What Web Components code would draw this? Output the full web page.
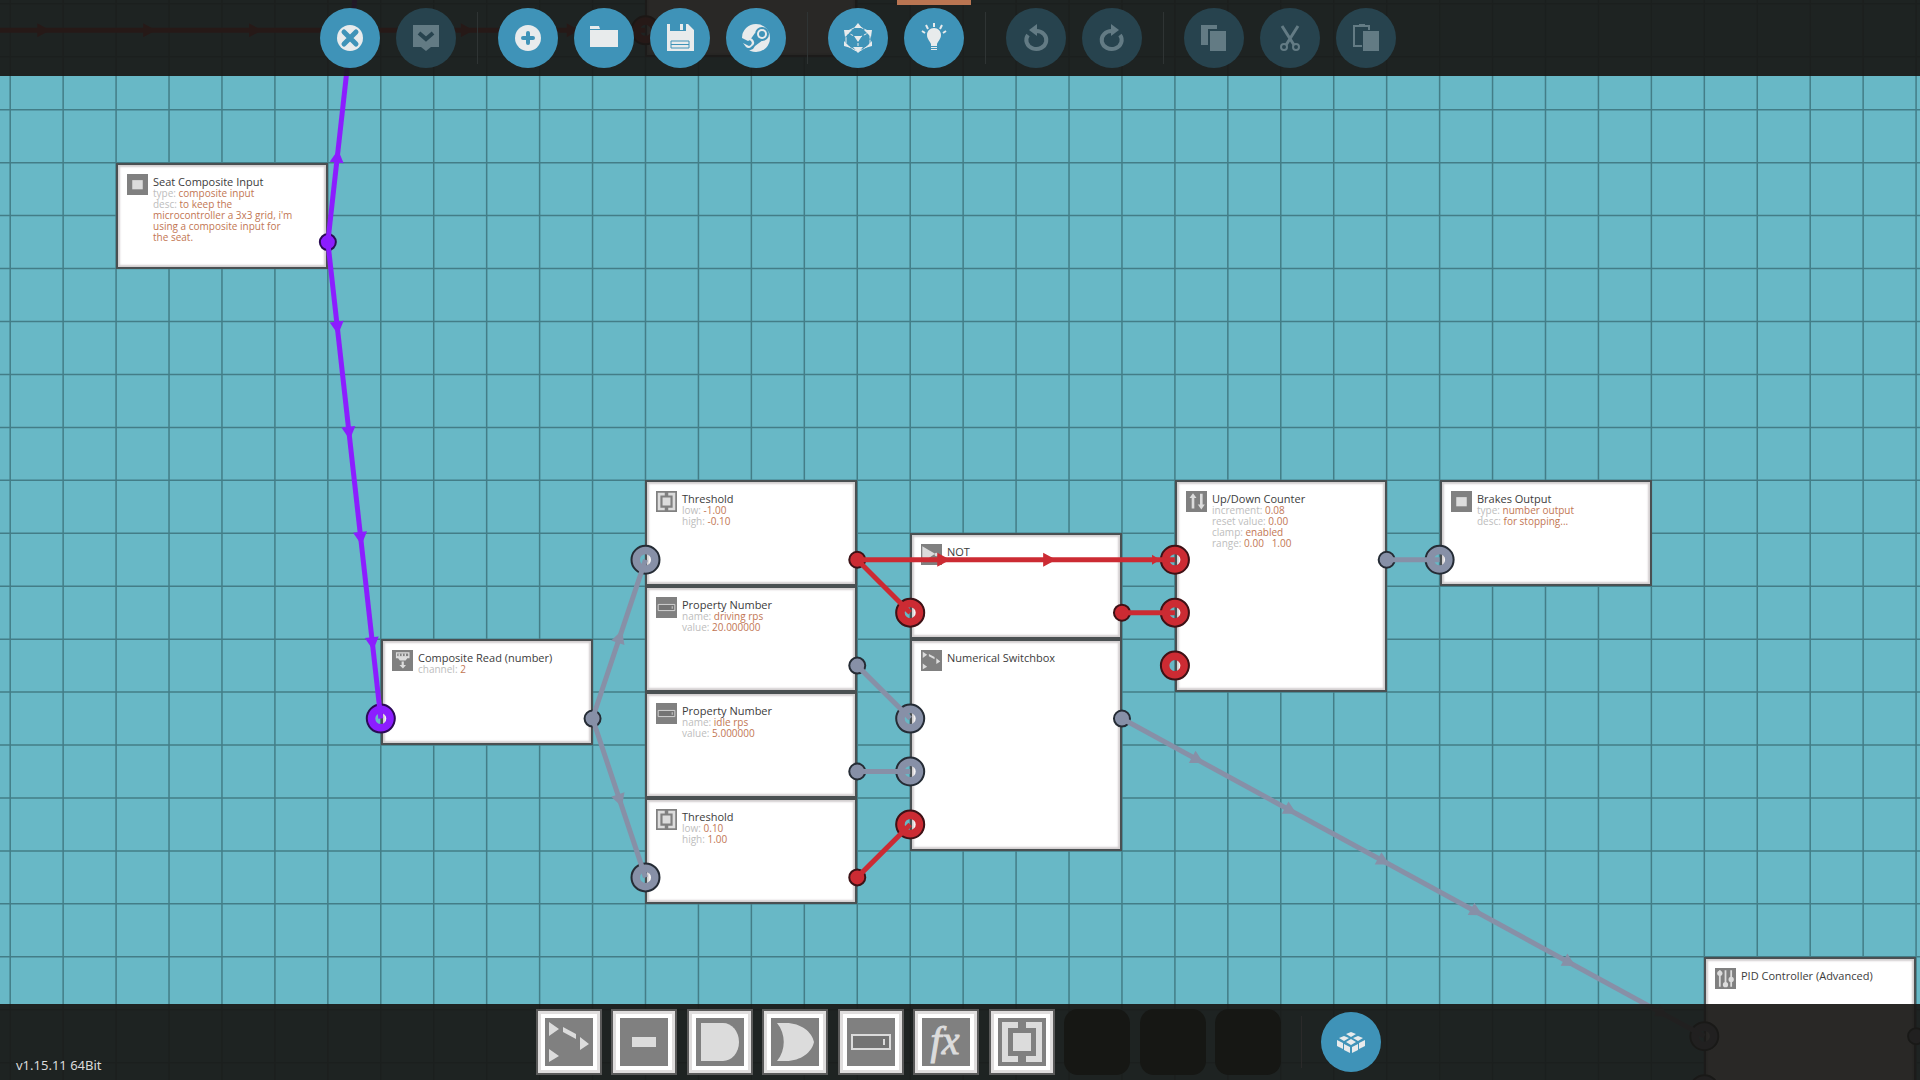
<!DOCTYPE html>
<html lang="en">
<head>
<meta charset="utf-8">
<title>Microcontroller Editor</title>
<style>
  html, body { margin: 0; height: 100%; background: #68b8c6; }
  body { font-family: "Noto Sans", "Open Sans", sans-serif; overflow: hidden; }
</style>
</head>
<body>
<editor-shell>
  <logic-board slot="board">
    <logic-node col="12" row="-2" rows="2"></logic-node>
    <logic-node col="2" row="2" rows="2" icon="pin" heading="Seat Composite Input">
      <node-field label="type:">composite input</node-field>
      <node-field label="desc:">to keep the <span>microcontroller a 3x3 grid, i'm using a composite input for the seat.</span></node-field>
    </logic-node>
    <logic-node col="7" row="11" rows="2" icon="read" heading="Composite Read (number)">
      <node-field label="channel:">2</node-field>
    </logic-node>
    <logic-node col="12" row="8" rows="2" icon="threshold" heading="Threshold">
      <node-field label="low:">-1.00</node-field>
      <node-field label="high:">-0.10</node-field>
    </logic-node>
    <logic-node col="12" row="10" rows="2" icon="property" heading="Property Number">
      <node-field label="name:">driving rps</node-field>
      <node-field label="value:">20.000000</node-field>
    </logic-node>
    <logic-node col="12" row="12" rows="2" icon="property" heading="Property Number">
      <node-field label="name:">idle rps</node-field>
      <node-field label="value:">5.000000</node-field>
    </logic-node>
    <logic-node col="12" row="14" rows="2" icon="threshold" heading="Threshold">
      <node-field label="low:">0.10</node-field>
      <node-field label="high:">1.00</node-field>
    </logic-node>
    <logic-node col="17" row="9" rows="2" icon="not" heading="NOT"></logic-node>
    <logic-node col="17" row="11" rows="4" icon="switch" heading="Numerical Switchbox"></logic-node>
    <logic-node col="22" row="8" rows="4" icon="counter" heading="Up/Down Counter">
      <node-field label="increment:">0.08</node-field>
      <node-field label="reset value:">0.00</node-field>
      <node-field label="clamp:">enabled</node-field>
      <node-field label="range:">0.00 &nbsp; 1.00</node-field>
    </logic-node>
    <logic-node col="27" row="8" rows="2" icon="pin" heading="Brakes Output">
      <node-field label="type:">number output</node-field>
      <node-field label="desc:">for stopping...</node-field>
    </logic-node>
    <logic-node col="32" row="17" rows="5" icon="pid" heading="PID Controller (Advanced)"></logic-node>
  </logic-board>

  <tool-bar slot="top">
    <tool-group>
      <round-button icon="close" label="Close"></round-button>
      <round-button icon="apply" label="Apply" disabled></round-button>
    </tool-group>
    <tool-group>
      <round-button icon="new" label="New"></round-button>
      <round-button icon="open" label="Open"></round-button>
      <round-button icon="save" label="Save"></round-button>
      <round-button icon="workshop" label="Workshop"></round-button>
    </tool-group>
    <tool-group>
      <round-button icon="body" label="Body"></round-button>
      <round-button icon="logic" label="Logic" selected></round-button>
    </tool-group>
    <tool-group>
      <round-button icon="undo" label="Undo" disabled></round-button>
      <round-button icon="redo" label="Redo" disabled></round-button>
    </tool-group>
    <tool-group>
      <round-button icon="copy" label="Copy" disabled></round-button>
      <round-button icon="cut" label="Cut" disabled></round-button>
      <round-button icon="paste" label="Paste" disabled></round-button>
    </tool-group>
  </tool-bar>

  <hot-bar slot="bottom">
    <hot-slot icon="switch" label="Numerical Switchbox"></hot-slot>
    <hot-slot icon="constant" label="Constant"></hot-slot>
    <hot-slot icon="and" label="AND"></hot-slot>
    <hot-slot icon="or" label="OR"></hot-slot>
    <hot-slot icon="property" label="Property Number"></hot-slot>
    <hot-slot icon="function" label="Function"></hot-slot>
    <hot-slot icon="threshold" label="Threshold"></hot-slot>
    <hot-slot></hot-slot>
    <hot-slot></hot-slot>
    <hot-slot></hot-slot>
    <round-button slot="action" icon="blocks" label="Components"></round-button>
    <span slot="version">v1.15.11 64Bit</span>
  </hot-bar>
</editor-shell>

<script>
// Board geometry: 17 cells span 900 pixels.
const CELL = 900 / 17;
const gx = c => 10.2 + c * CELL;
const gy = r => 56.8 + r * CELL;

// Component glyphs, drawn light on a 48 x 48 grey plate.
const NODE_ICONS = {
  pin: '<path d="M12 14h24v21H12z"/>',
  constant: '<path d="M12 19h24v10H12z"/>',
  switch: '<path d="M4 4v14l10-7zM4 31v13l10-6zM35 19v13l9-6zM18 9l13 7v5l-13-7z"/>',
  and: '<path d="M5 5h22a16 19 0 0 1 0 38H5z"/>',
  or: '<path d="M6 5h9c15 0 26 9 28 19-2 10-13 19-28 19H6C15 32 15 16 6 5z"/>',
  property: '<path d="M5 17h38v14H5z" fill="#747474" stroke="#dcdcdc" stroke-width="2"/><path d="M36 21h2v6h-2z"/>',
  threshold: '<path d="M4 4h16v6H10v28h10v6H4zM44 4H28v6h10v28H28v6h16zM15 15h18v18H15z"/>',
  read: '<path d="M9 5h31v14h-5l-4 5H18l-4-5H9z"/><path d="M12 8h25v6H12z" fill="#808080"/><path d="M15 8h3v6h-3zM22 8h3v6h-3zM29 8h3v6h-3zM22 26h5v8h5l-7 8-8-8h5z"/>',
  not: '<path d="M3 5l29 17-29 20z"/><circle cx="35" cy="24" r="4"/>',
  counter: '<path d="M16 5l8 11h-5v24h-6V16H8zM35 42l8-11h-5V6h-6v25h-5z"/>',
  pid: '<path d="M9 5h4v38H9zM22 5h4v38h-4zM35 5h4v38h-4z"/><circle cx="11" cy="12" r="6"/><circle cx="24" cy="38" r="6"/><circle cx="37" cy="26" r="6"/>',
  function: '<text x="23" y="36" text-anchor="middle" font-family="Liberation Serif, serif" font-style="italic" font-size="40" stroke="#dcdcdc" stroke-width="1">fx</text>'
};

// Button glyphs on a 60 x 60 disc. --disc paints the cut-out parts.
const BUTTON_ICONS = {
  close: '<circle cx="30" cy="30" r="13"/><path class="cut" d="M24 24l12 12M36 24L24 36" stroke-width="5" stroke-linecap="round"/>',
  apply: '<path d="M17 17h26v22h-8l-5 4-5-4h-8z"/><path class="cut" d="M23 25l7 6 7-6" stroke-width="4"/>',
  new: '<circle cx="30" cy="30" r="13"/><path class="cut" d="M30 25v10M25 30h10" stroke-width="4" stroke-linecap="round"/>',
  open: '<path d="M16 18h9l1 3H16zM16 22h28v17H16z"/>',
  save: '<path d="M17 16h3v7h16v-7h2l6 6v21H17z"/><path d="M30 16h3v6h-3z"/><path class="cut" d="M21 33h18v7H21zM21 36.500h18" stroke-width="1"/>',
  workshop: '<circle cx="30" cy="30" r="14"/><path class="hole" d="M14 29l8 4 2-1 5-7 8 7-8 6-2 3-5 2-6-5-2-4z"/><circle class="hole" cx="36" cy="26" r="7"/><circle cx="36" cy="26" r="5"/><circle class="hole" cx="36" cy="26" r="3"/><path d="M17 35l6 3a3 3 0 0 0 2-5l-3-2a4 4 0 0 1 4 7 4 4 0 0 1-6 1z"/>',
  body: '<path d="M30 18l12 6v13l-12 7-12-7V24z" fill="none" stroke="currentColor" stroke-width="1" stroke-dasharray="6 1"/><path d="M18 24l12 6 12-6M30 30v14" fill="none" stroke="currentColor" stroke-width="1" stroke-dasharray="3 2"/><path d="M30 15l4 5h-8zM30 45l5-6H25zM16 22h8l-7 7zM44 22h-8l7 7zM16 33l7 7-7-2zM44 33l-7 7 7-2zM30 34l-4-6h8z"/>',
  logic: '<path d="M30 20c4 0 7 3 7 7 0 4-3 6-4 9v2h-6v-2c-1-3-4-5-4-9 0-4 3-7 7-7zM27 39h6v1h-6zM27 41h6v1h-6z"/><path d="M30 15v4M22 17l2 4M38 17l-2 4M18 23l3 2M42 23l-3 2" fill="none" stroke="currentColor" stroke-width="2"/>',
  undo: '<path d="M22 27a10 9 0 1 0 8-4h-2" fill="none" stroke="currentColor" stroke-width="4"/><path d="M31 16v12l-8-6z"/>',
  redo: '<path d="M38 27a10 9 0 1 1-8-4h2" fill="none" stroke="currentColor" stroke-width="4"/><path d="M29 16v12l8-6z"/>',
  copy: '<path d="M17 17h16v4h-9v16h-7zM26 23h16v20H26z"/>',
  cut: '<path d="M22 18l12 19M38 18L26 37" fill="none" stroke="currentColor" stroke-width="3"/><circle cx="24" cy="39" r="3" fill="none" stroke="currentColor" stroke-width="2"/><circle cx="36" cy="39" r="3" fill="none" stroke="currentColor" stroke-width="2"/>',
  paste: '<path d="M26 38h-8V18h15v4" fill="none" stroke="currentColor" stroke-width="2"/><path d="M23 16h6v3h-6zM27 23h16v20H27z"/>',
  blocks: '<path d="M30 20l5 2-5 3-5-3zM23 24l5 2-5 3-5-3zM37 24l5 2-5 3-5-3zM30 27l5 3-5 3-5-3zM16 28l6 3v6l-6-3zM44 28l-6 3v6l6-3zM23 32l6 3v6l-6-3zM37 32l-6 3v6l6-3z"/>'
};

const plate = name =>
  `<svg viewBox="0 0 48 48" aria-hidden="true"><path d="M0 0h48v48H0z" fill="#808080"/><g fill="#dcdcdc">${NODE_ICONS[name]}</g></svg>`;

class BaseElement extends HTMLElement {
  connectedCallback() {
    if (this.shadowRoot) return;
    this.attachShadow({ mode: 'open' }).innerHTML = this.render();
  }
}

customElements.define('editor-shell', class extends BaseElement {
  render() {
    return `<style>
      :host { position: relative; display: flex; flex-direction: column; justify-content: space-between; height: 100vh; overflow: hidden; }
      slot[name="board"]::slotted(*) { position: absolute; inset: 0; }
      ::slotted(:not([slot="board"])) { position: relative; }
    </style><slot name="board"></slot><slot name="top"></slot><slot name="bottom"></slot>`;
  }
});

const WIRE = { purple: '#8c1dff', red: '#cc2b33', grey: '#8790a7' };
const EDGE = { purple: '#2b0b55', red: '#3d1216', grey: '#252c35' };
const WIRES = [
  ['purple', 6, 3.5, 7, -5.5], ['purple', 6, 3.5, 7, 12.5],
  ['grey', 11, 12.5, 12, 9.5], ['grey', 11, 12.5, 12, 15.5],
  ['grey', 16, 11.5, 17, 12.5], ['grey', 16, 13.5, 17, 13.5],
  ['grey', 26, 9.5, 27, 9.5], ['grey', 21, 12.5, 32, 18.5],
  ['red', 16, 9.5, 17, 10.5], ['red', 16, 9.5, 22, 9.5],
  ['red', 21, 10.5, 22, 10.5], ['red', 16, 15.5, 17, 14.5],
  ['red', -5, -0.5, 12, -0.5]
];
const INPUTS = [
  ['purple', 7, 12.5], ['grey', 12, 9.5], ['grey', 12, 15.5],
  ['red', 17, 10.5], ['grey', 17, 12.5], ['grey', 17, 13.5], ['red', 17, 14.5],
  ['red', 22, 9.5], ['red', 22, 10.5], ['red', 22, 11.5],
  ['grey', 27, 9.5], ['grey', 32, 18.5], ['grey', 32, 19.5], ['red', 12, -0.5]
];
const OUTPUTS = [
  ['purple', 6, 3.5], ['grey', 11, 12.5], ['red', 16, 9.5], ['grey', 16, 11.5],
  ['grey', 16, 13.5], ['red', 16, 15.5], ['red', 21, 10.5], ['grey', 21, 12.5],
  ['grey', 26, 9.5], ['grey', 36, 18.5]
];

customElements.define('logic-board', class extends BaseElement {
  grid() {
    let d = '';
    for (let c = 0; c < 80; c++) d += `M${gx(c)} 0V3000`;
    for (let r = -1; r < 55; r++) d += `M0 ${gy(r)}H4200`;
    return `<path d="${d}" fill="none" stroke="#437d87" stroke-width="1.5"/>`;
  }
  wire([tone, c1, r1, c2, r2]) {
    const x1 = gx(c1), y1 = gy(r1), x2 = gx(c2), y2 = gy(r2);
    const len = Math.hypot(x2 - x1, y2 - y1);
    const angle = Math.atan2(y2 - y1, x2 - x1) * 180 / Math.PI;
    let heads = '';
    for (let d = 80; d < len - 20; d += CELL * 2) {
      const small = len - d < 40;
      heads += small ? `M${d + 3} -5l8 5-8 5z` : `M${d} -7l13 7-13 7z`;
    }
    return `<g transform="translate(${x1} ${y1}) rotate(${angle})" fill="${WIRE[tone]}"><path d="M0 0H${len}" stroke="${WIRE[tone]}" stroke-width="5"/><path d="${heads}"/></g>`;
  }
  input([tone, c, r]) {
    return `<g fill="none"><circle cx="${gx(c)}" cy="${gy(r)}" r="10" stroke="${WIRE[tone]}" stroke-width="9"/><circle cx="${gx(c)}" cy="${gy(r)}" r="14" stroke="${EDGE[tone]}" stroke-width="2"/></g>`;
  }
  output([tone, c, r]) {
    return `<circle cx="${gx(c)}" cy="${gy(r)}" r="8" fill="${WIRE[tone]}" stroke="${EDGE[tone]}" stroke-width="2"/>`;
  }
  render() {
    return `<style>
      :host { display: block; overflow: hidden; background: #68b8c6; }
      svg { position: absolute; inset: 0; width: 100%; height: 100%; pointer-events: none; }
    </style>
    <svg aria-hidden="true">${this.grid()}</svg>
    <slot></slot>
    <svg aria-hidden="true">${INPUTS.map(this.input).join('')}${OUTPUTS.map(this.output).join('')}${WIRES.map(this.wire).join('')}</svg>`;
  }
});

customElements.define('logic-node', class extends BaseElement {
  render() {
    const n = k => Number(this.getAttribute(k));
    const icon = this.getAttribute('icon');
    this.style.left = Math.round(gx(n('col'))) + 'px';
    this.style.top = Math.round(gy(n('row'))) + 'px';
    this.style.height = Math.round(n('rows') * CELL) + 'px';
    return `<style>
      :host { position: absolute; box-sizing: border-box; width: 212px; display: flex; align-items: flex-start; gap: 5px;
              padding: 9px; border: 2px solid #4a5052; background: #fff;
              box-shadow: inset 0 0 2px 2px #d3cfd0; font-family: "Open Sans", "Noto Sans", sans-serif; }
      svg { flex: none; width: 21px; height: 21px; display: block; }
      div { width: 140px; }
      h2 { margin: 0 0 -2px; font-size: 11px; line-height: 16px; font-weight: 400; color: #3c3c3c; white-space: nowrap; }
    </style>${icon ? plate(icon) + `<div><h2>${this.getAttribute('heading')}</h2><slot></slot></div>` : ''}`;
  }
});

customElements.define('node-field', class extends BaseElement {
  render() {
    return `<style>
      :host { display: block; font-size: 10px; line-height: 11px; color: #c27653; }
      .label { color: #bdbdbd; }
      ::slotted(span) { display: block; }
    </style><span class="label">${this.getAttribute('label')}</span> <slot></slot>`;
  }
});

customElements.define('tool-bar', class extends BaseElement {
  render() {
    return `<style>
      :host { display: flex; align-items: center; box-sizing: border-box; height: 76px; padding-left: 320px; background: rgba(25, 24, 22, .93); }
    </style><slot></slot>`;
  }
});

customElements.define('tool-group', class extends BaseElement {
  render() {
    return `<style>
      :host { display: flex; align-items: center; gap: 16px; }
      :host(:not(:first-child))::before { content: ""; width: 1px; height: 52px; margin: 0 4px 0 21px; background: #2f3434; }
    </style><slot></slot>`;
  }
});

customElements.define('round-button', class extends BaseElement {
  render() {
    const off = this.hasAttribute('disabled');
    return `<style>
      :host { position: relative; display: block; --disc: #3f93b8; }
      :host([disabled]) { --disc: #27434e; }
      :host([selected])::before { content: ""; position: absolute; left: -7px; right: -7px; top: -8px; height: 5px; background: #b97552; }
      button { display: block; width: 60px; height: 60px; padding: 0; border: 0; border-radius: 50%; background: var(--disc); color: #e8ebec; cursor: pointer; }
      button:disabled { color: #637b84; cursor: default; }
      svg { display: block; width: 60px; height: 60px; fill: currentColor; }
      .cut { fill: none; stroke: var(--disc); }
      .hole { fill: var(--disc); }
    </style><button type="button" aria-label="${this.getAttribute('label')}"${off ? ' disabled' : ''}><svg viewBox="0 0 60 60" aria-hidden="true">${BUTTON_ICONS[this.getAttribute('icon')]}</svg></button>`;
  }
});

customElements.define('hot-bar', class extends BaseElement {
  render() {
    return `<style>
      :host { display: grid; grid-template-columns: 1fr auto 1fr; align-items: center; height: 76px; padding-right: 4px; background: rgba(25, 24, 22, .93); }
      .version { align-self: end; padding: 0 0 5px 16px; font-size: 13px; line-height: 20px; color: #dadada; }
      .bar { display: flex; align-items: center; }
      .slots { display: flex; justify-content: space-between; width: 746px; }
      i { width: 1px; height: 52px; margin: 0 19px; background: #2b2a2a; }
    </style>
    <div class="version"><slot name="version"></slot></div>
    <div class="bar"><div class="slots"><slot></slot></div><i></i><slot name="action"></slot></div>`;
  }
});

customElements.define('hot-slot', class extends BaseElement {
  render() {
    const icon = this.getAttribute('icon');
    return `<style>
      :host { display: block; }
      button { display: block; box-sizing: border-box; width: 66px; height: 66px; padding: 0; border: 0; border-radius: 14px; background: #161714; }
      button.filled { padding: 7px; border: 2px solid #5a5a5a; border-radius: 0; background: #fff; box-shadow: inset 0 0 0 3px #dfdddd; cursor: pointer; }
      svg { display: block; width: 48px; height: 48px; }
    </style><button type="button" ${icon ? `class="filled" aria-label="${this.getAttribute('label')}"` : 'aria-label="Empty slot"'}>${icon ? plate(icon) : ''}</button>`;
  }
});
</script>
</body>
</html>
